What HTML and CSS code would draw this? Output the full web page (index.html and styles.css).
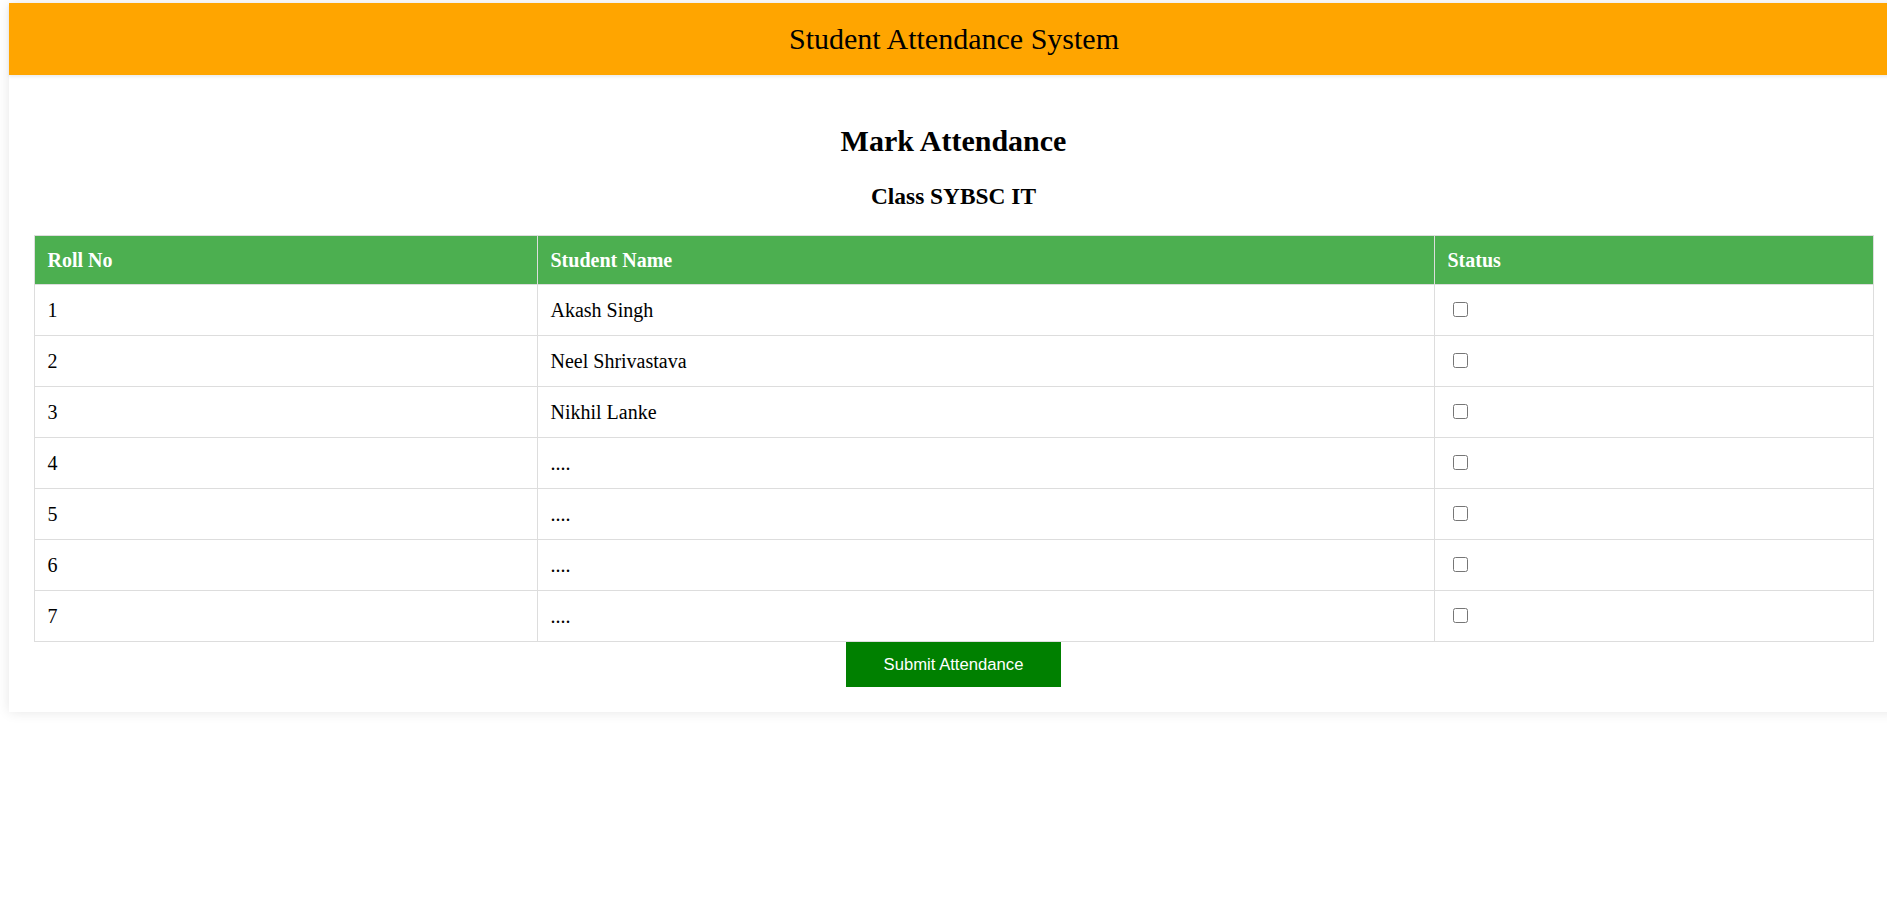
FILE: index.html
```html
<!DOCTYPE html>
<html lang="en">
<head>
<meta charset="utf-8">
<title>Student Attendance System</title>
<link rel="stylesheet" href="styles.css">
</head>
<body>
<div class="card">
  <header class="topbar">Student Attendance System</header>
  <main class="content">
    <h2 class="page-title">Mark Attendance</h2>
    <h3 class="class-name">Class SYBSC IT</h3>
    <table class="attendance">
      <colgroup>
        <col class="col-roll">
        <col class="col-name">
        <col class="col-status">
      </colgroup>
      <thead>
        <tr><th>Roll No</th><th>Student Name</th><th>Status</th></tr>
      </thead>
      <tbody>
        <tr><td>1</td><td>Akash Singh</td><td><input type="checkbox" class="check"></td></tr>
        <tr><td>2</td><td>Neel Shrivastava</td><td><input type="checkbox" class="check"></td></tr>
        <tr><td>3</td><td>Nikhil Lanke</td><td><input type="checkbox" class="check"></td></tr>
        <tr><td>4</td><td>....</td><td><input type="checkbox" class="check"></td></tr>
        <tr><td>5</td><td>....</td><td><input type="checkbox" class="check"></td></tr>
        <tr><td>6</td><td>....</td><td><input type="checkbox" class="check"></td></tr>
        <tr><td>7</td><td>....</td><td><input type="checkbox" class="check"></td></tr>
      </tbody>
    </table>
    <div class="actions">
      <button class="submit" type="button">Submit Attendance</button>
    </div>
  </main>
</div>
</body>
</html>
```

FILE: styles.css
```css
html {
  overflow: hidden;
}
body {
  margin: 0;
  padding-bottom: 40px;
  background: #ffffff;
  font-family: "Liberation Serif", "Times New Roman", serif;
  font-size: 20px;
  color: #000;
}
.card {
  margin: 3px 0 0 9px;
  width: 1890px;
  background: #fff;
  box-shadow: 0 0 12px rgba(0, 0, 0, 0.1);
}
.topbar {
  background: #ffa500;
  text-align: center;
  font-size: 30px;
  line-height: 34px;
  padding: 19px 0;
  box-shadow: 0 2px 3px rgba(0, 0, 0, 0.08);
  position: relative;
}
.content {
  padding: 25px 26px 25px 25px;
}
.page-title {
  text-align: center;
  font-size: 30px;
  font-weight: bold;
  margin: 24px 0 25px;
}
.class-name {
  text-align: center;
  font-size: 23.4px;
  font-weight: bold;
  margin: 0 0 25px;
}
.attendance {
  width: 1839px;
  border-collapse: collapse;
  table-layout: fixed;
}
.col-roll { width: 503px; }
.col-name { width: 897px; }
.col-status { width: 439px; }
.attendance th,
.attendance td {
  border: 1px solid #dddddd;
  padding: 12.5px 12.5px;
  text-align: left;
  line-height: 23px;
}
.attendance th {
  background: #4caf50;
  color: #ffffff;
  font-weight: bold;
}
.attendance td {
  height: 25px;
}
.check {
  display: block;
  width: 15px;
  height: 15px;
  margin: 4.5px 0 5.5px 5px;
}
.actions {
  display: flex;
  justify-content: center;
}
.submit {
  background: #008000;
  color: #ffffff;
  border: none;
  font-family: "Liberation Sans", Arial, sans-serif;
  font-size: 16.67px;
  line-height: 20px;
  padding: 12.5px 37.5px;
  cursor: pointer;
}
```
